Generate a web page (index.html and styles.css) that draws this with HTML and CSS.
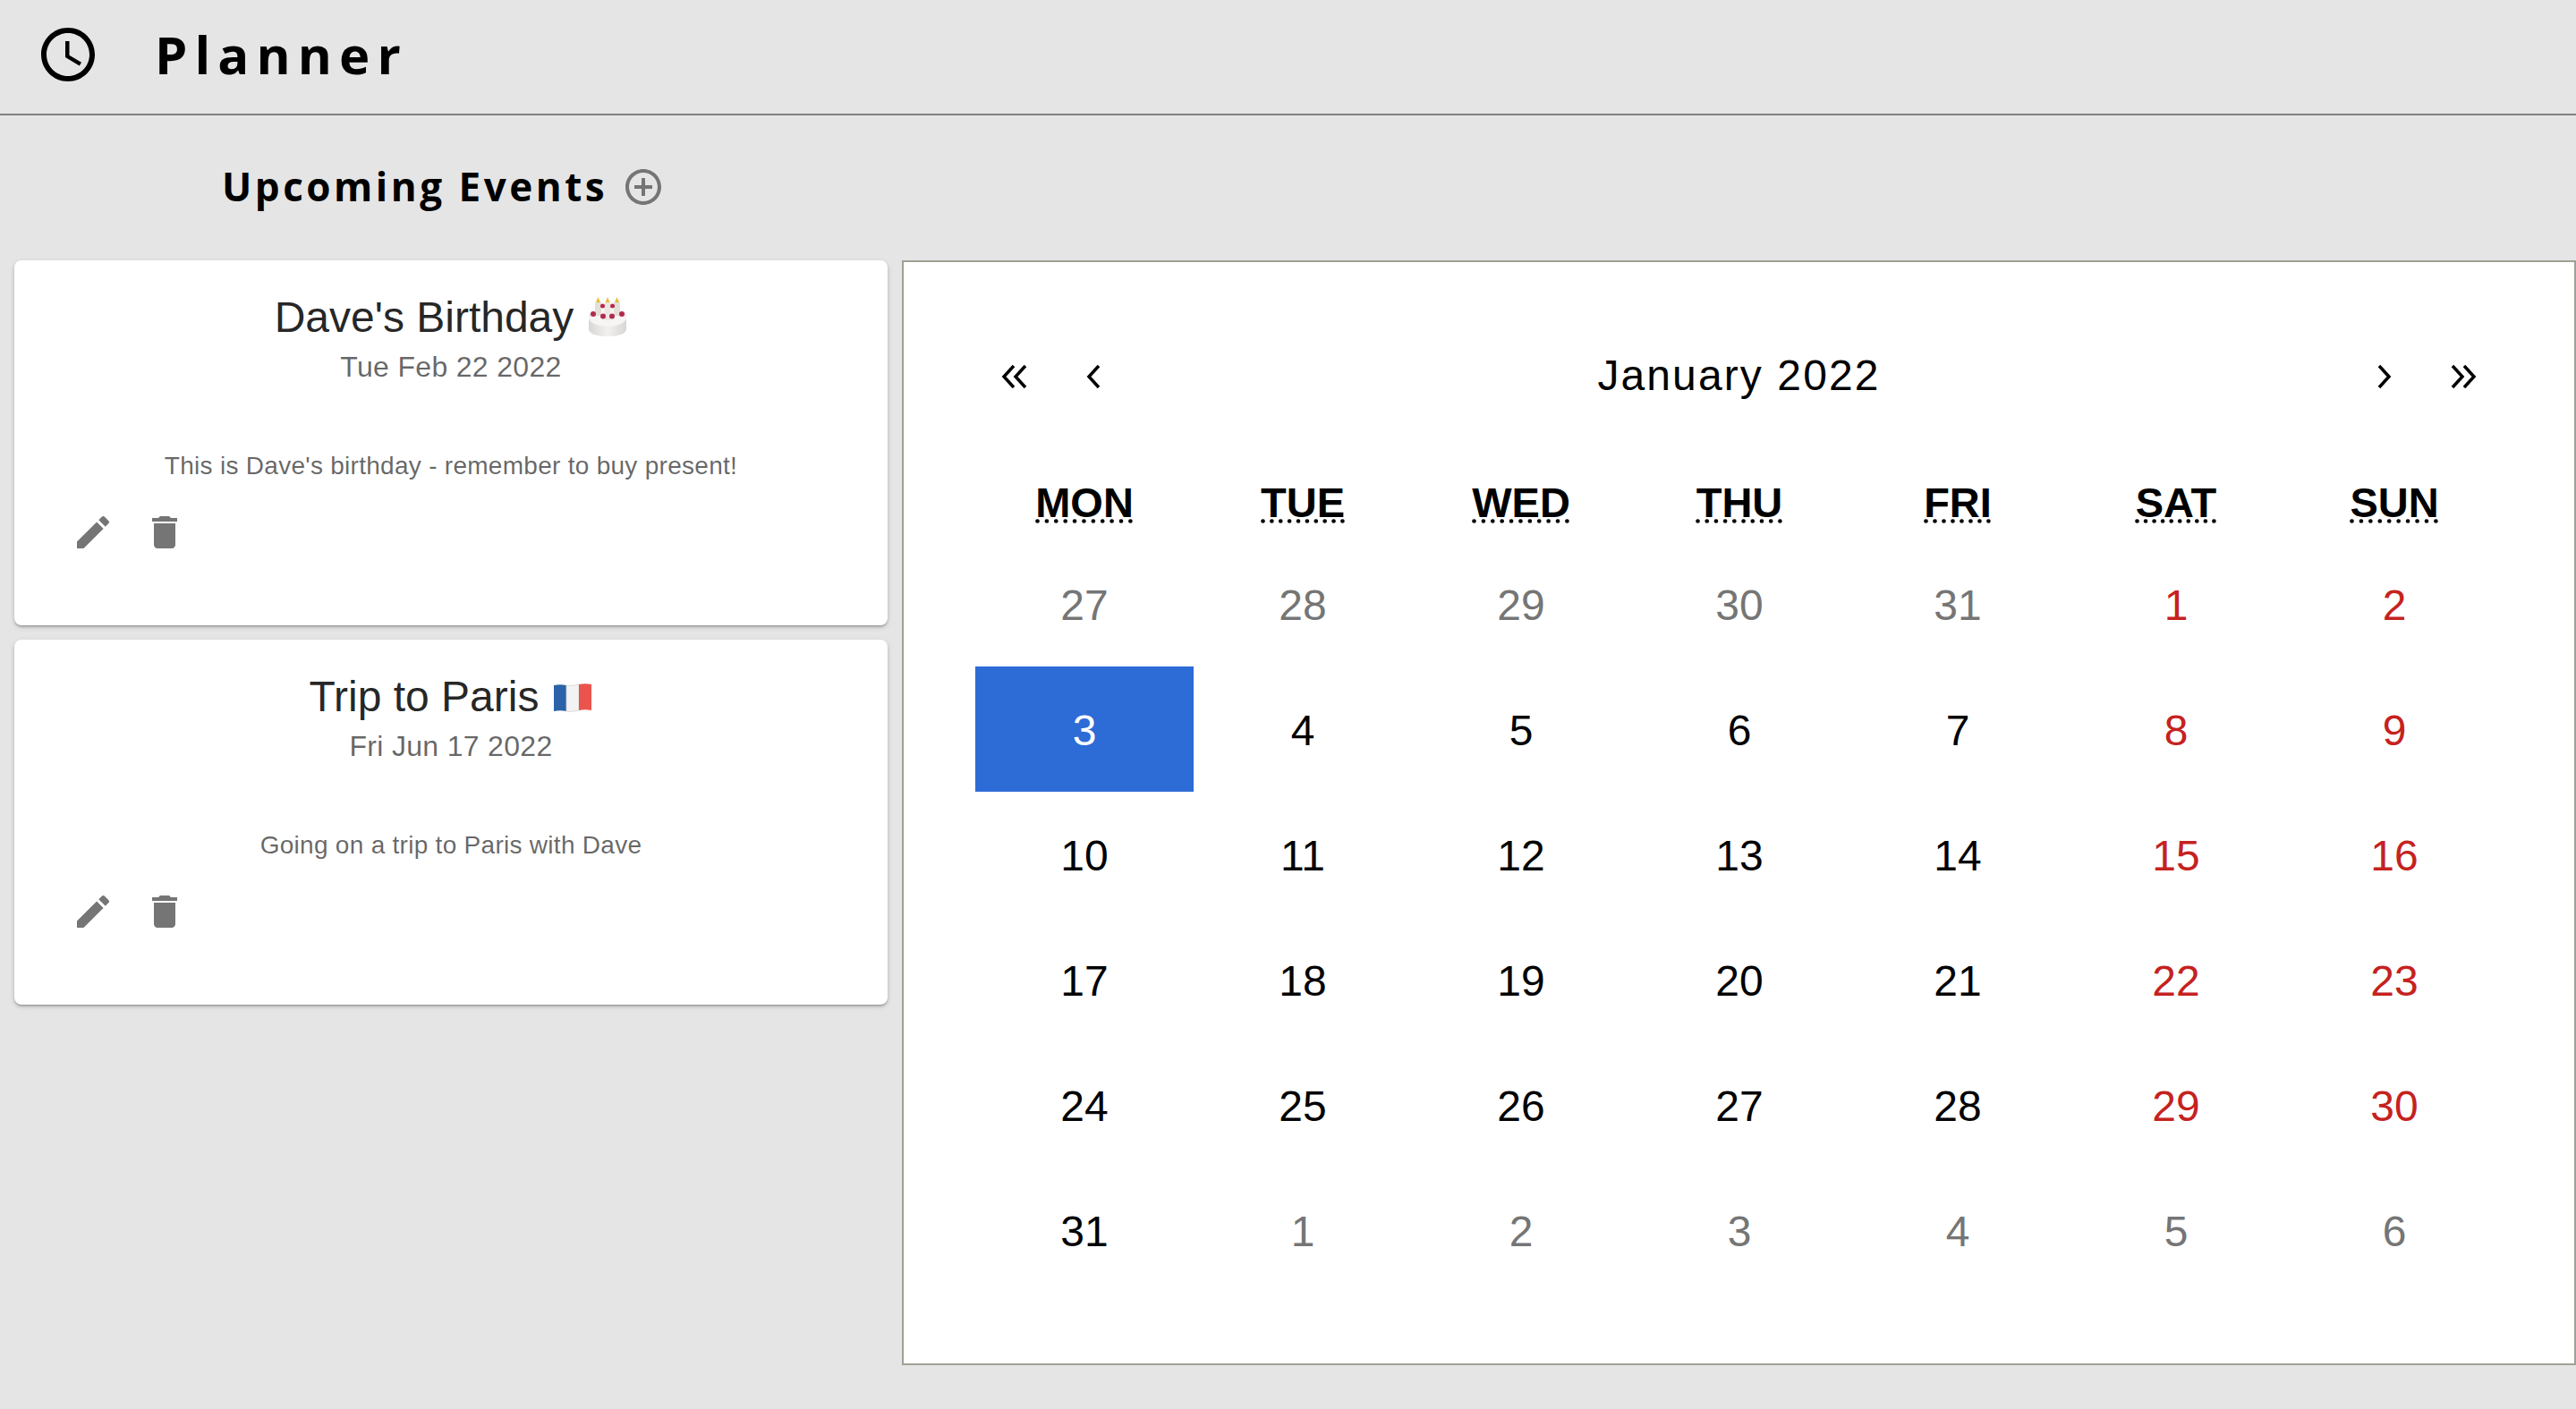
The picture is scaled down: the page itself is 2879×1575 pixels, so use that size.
FILE: index.html
```html
<!DOCTYPE html>
<html lang="en">
<head>
    <meta charset="utf-8">
    <title>Planner</title>
    <link rel="stylesheet" href="styles.css">
</head>
<body>
    <header class="app-bar">
        <svg class="clock-icon" viewBox="0 0 24 24"><path d="M11.99 2C6.47 2 2 6.48 2 12s4.47 10 9.99 10C17.52 22 22 17.52 22 12S17.52 2 11.99 2zM12 20c-4.42 0-8-3.58-8-8s3.58-8 8-8 8 3.58 8 8-3.58 8-8 8zm.5-13H11v6l5.25 3.15.75-1.23-4.5-2.67z"/></svg>
        <h1>Planner</h1>
    </header>

    <div class="section-title">
        <h2>Upcoming Events</h2>
        <svg class="add-icon" viewBox="0 0 24 24"><path d="M13 7h-2v4H7v2h4v4h2v-4h4v-2h-4V7zm-1-5C6.49 2 2 6.49 2 12s4.49 10 10 10 10-4.49 10-10S17.51 2 12 2zm0 18c-4.41 0-8-3.59-8-8s3.59-8 8-8 8 3.59 8 8-3.59 8-8 8z"/></svg>
    </div>

    <main class="columns">
        <section class="events">
            <article class="card">
                <div class="card-title">
                    <span>Dave's Birthday</span>
                    <svg class="emoji" viewBox="0 0 44 44">
                        <defs>
                            <linearGradient id="cake-side" x1="0" x2="1" y1="0" y2="0">
                                <stop offset="0" stop-color="#d8d6d3"/>
                                <stop offset=".5" stop-color="#f2f1ef"/>
                                <stop offset="1" stop-color="#d8d6d3"/>
                            </linearGradient>
                        </defs>
                        <path d="M1 21c0-4 9-7 21-7s21 3 21 7v15c0 5-9 8-21 8S1 41 1 36z" fill="url(#cake-side)"/>
                        <ellipse cx="22" cy="23" rx="21" ry="10" fill="#f6f5f4"/>
                        <rect x="8" y="6" width="7" height="15" fill="#e4dfd7"/>
                        <rect x="18.500" y="6" width="7" height="20" fill="#ece8e1"/>
                        <rect x="29" y="6" width="7" height="15" fill="#e4dfd7"/>
                        <path d="M11.500 0l2.500 6h-5zM22 0l2.500 6h-5zM32.500 0l2.500 6h-5z" fill="#e9bd3f"/>
                        <g fill="#b32a50">
                            <circle cx="6" cy="19" r="3"/><circle cx="38" cy="19" r="3"/>
                            <circle cx="17" cy="21.500" r="3"/><circle cx="27" cy="21.500" r="3"/>
                            <circle cx="16.500" cy="10" r="2.500"/><circle cx="27.500" cy="10" r="2.500"/>
                        </g>
                    </svg>
                </div>
                <p class="card-date">Tue Feb 22 2022</p>
                <p class="card-text">This is Dave's birthday - remember to buy present!</p>
                <div class="card-actions">
                    <svg class="action-icon" viewBox="0 0 24 24"><path d="M3 17.25V21h3.75L17.81 9.94l-3.75-3.75L3 17.25zM20.710 7.040c.39-.39.39-1.020 0-1.410l-2.340-2.340c-.39-.39-1.020-.39-1.410 0l-1.830 1.830 3.750 3.750 1.830-1.830z"/></svg>
                    <svg class="action-icon" viewBox="0 0 24 24"><path d="M6 19c0 1.100.9 2 2 2h8c1.100 0 2-.9 2-2V7H6v12zM19 4h-3.500l-1-1h-5l-1 1H5v2h14V4z"/></svg>
                </div>
            </article>
            <article class="card">
                <div class="card-title">
                    <span>Trip to Paris</span>
                    <svg class="emoji" viewBox="0 0 44 44">
                        <path d="M1 10c5-1 9-1 14 0v29c-5-1-9-1-14 0z" fill="#2b63a8"/>
                        <path d="M15 10c5 1 9 0 14-1v29c-5 1-9 2-14 1z" fill="#f4f3f3" stroke="#d2d2d2" stroke-width=".8"/>
                        <path d="M29 9c5-1 9-1 14 0v29c-5-1-9-1-14 0z" fill="#e9544c"/>
                    </svg>
                </div>
                <p class="card-date">Fri Jun 17 2022</p>
                <p class="card-text">Going on a trip to Paris with Dave</p>
                <div class="card-actions">
                    <svg class="action-icon" viewBox="0 0 24 24"><path d="M3 17.25V21h3.75L17.81 9.94l-3.75-3.75L3 17.25zM20.710 7.040c.39-.39.39-1.020 0-1.410l-2.340-2.340c-.39-.39-1.020-.39-1.410 0l-1.830 1.830 3.750 3.750 1.830-1.830z"/></svg>
                    <svg class="action-icon" viewBox="0 0 24 24"><path d="M6 19c0 1.100.9 2 2 2h8c1.100 0 2-.9 2-2V7H6v12zM19 4h-3.500l-1-1h-5l-1 1H5v2h14V4z"/></svg>
                </div>
            </article>
        </section>

        <section class="calendar">
            <nav class="calendar-nav">
                <button class="nav-arrow"><svg class="chevron-icon" viewBox="0 0 30 28"><path d="M14 2L3 14l11 12M27 2L16 14l11 12"/></svg></button>
                <button class="nav-arrow"><svg class="chevron-icon" viewBox="0 0 30 28"><path d="M21 2L10 14l11 12"/></svg></button>
                <span class="nav-label">January 2022</span>
                <button class="nav-arrow"><svg class="chevron-icon" viewBox="0 0 30 28"><path d="M9 2l11 12L9 26"/></svg></button>
                <button class="nav-arrow"><svg class="chevron-icon" viewBox="0 0 30 28"><path d="M3 2l11 12L3 26M16 2l11 12-11 12"/></svg></button>
            </nav>
            <div class="weekdays">
                <abbr title="Monday">MON</abbr>
                <abbr title="Tuesday">TUE</abbr>
                <abbr title="Wednesday">WED</abbr>
                <abbr title="Thursday">THU</abbr>
                <abbr title="Friday">FRI</abbr>
                <abbr title="Saturday">SAT</abbr>
                <abbr title="Sunday">SUN</abbr>
            </div>
            <div class="days">
                <button class="day other">27</button>
                <button class="day other">28</button>
                <button class="day other">29</button>
                <button class="day other">30</button>
                <button class="day other">31</button>
                <button class="day weekend">1</button>
                <button class="day weekend">2</button>

                <button class="day active">3</button>
                <button class="day">4</button>
                <button class="day">5</button>
                <button class="day">6</button>
                <button class="day">7</button>
                <button class="day weekend">8</button>
                <button class="day weekend">9</button>

                <button class="day">10</button>
                <button class="day">11</button>
                <button class="day">12</button>
                <button class="day">13</button>
                <button class="day">14</button>
                <button class="day weekend">15</button>
                <button class="day weekend">16</button>

                <button class="day">17</button>
                <button class="day">18</button>
                <button class="day">19</button>
                <button class="day">20</button>
                <button class="day">21</button>
                <button class="day weekend">22</button>
                <button class="day weekend">23</button>

                <button class="day">24</button>
                <button class="day">25</button>
                <button class="day">26</button>
                <button class="day">27</button>
                <button class="day">28</button>
                <button class="day weekend">29</button>
                <button class="day weekend">30</button>

                <button class="day">31</button>
                <button class="day other">1</button>
                <button class="day other">2</button>
                <button class="day other">3</button>
                <button class="day other">4</button>
                <button class="day other">5</button>
                <button class="day other">6</button>
            </div>
        </section>
    </main>
</body>
</html>
```

FILE: styles.css
```css
html {
    font-family: "Open Sans", "Liberation Sans", sans-serif;
    color: #000;
}

body {
    margin: 0;
    height: 1575px;
    overflow: hidden;
    background: #e5e5e5;
}

/* --- Top bar --- */
.app-bar {
    display: flex;
    align-items: center;
    box-sizing: border-box;
    height: 129px;
    padding: 0 0 6px 40px;
    border-bottom: 2px solid #808080;
}

.clock-icon {
    width: 72px;
    height: 72px;
    margin-right: 61px;
}

h1 {
    margin: 0;
    font-size: 58px;
    font-weight: 700;
    letter-spacing: 0.14em;
}

.section-title {
    display: flex;
    align-items: center;
    box-sizing: border-box;
    height: 162px;
    padding: 0 0 3px 248px;
}

h2 {
    margin: 0 0 2px;
    font-size: 44px;
    font-weight: 700;
    letter-spacing: 0.08em;
}

.add-icon {
    width: 48px;
    height: 48px;
    margin-left: 16px;
    fill: #757575;
}

/* --- Two columns --- */
.columns {
    display: grid;
    grid-template-columns: 976px 1871px;
    column-gap: 16px;
    padding-left: 16px;
    align-items: start;
}

.events {
    display: flex;
    flex-direction: column;
    gap: 16px;
}

.card {
    box-sizing: border-box;
    height: 408px;
    padding-top: 31px;
    text-align: center;
    font-family: "Liberation Sans", Arial, sans-serif;
    background: #fff;
    border-radius: 8px;
    box-shadow: 0 2px 2px -1px rgba(0,0,0,.2), 0 2px 3px 0 rgba(0,0,0,.14), 0 2px 6px 0 rgba(0,0,0,.12);
}

.card-title {
    display: flex;
    justify-content: center;
    align-items: center;
    gap: 16px;
    height: 64px;
    font-size: 48px;
    color: rgba(0,0,0,.87);
}

.emoji {
    width: 44px;
    height: 44px;
}

.card-date {
    margin: 0;
    font-size: 32px;
    line-height: 48px;
    letter-spacing: 0.01em;
    color: rgba(0,0,0,.6);
}

.card-text {
    margin: 67px 0 0;
    font-size: 28px;
    line-height: 40px;
    letter-spacing: 0.01em;
    color: rgba(0,0,0,.6);
}

.card-actions {
    display: flex;
    gap: 32px;
    margin-top: 30px;
    padding-left: 64px;
}

.action-icon {
    width: 48px;
    height: 48px;
    fill: #757575;
}

/* --- Calendar --- */
.calendar {
    box-sizing: border-box;
    height: 1235px;
    padding: 80px 80px 0;
    font-family: "Liberation Sans", Arial, sans-serif;
    background: #fff;
    border: 2px solid #a0a096;
}

.calendar-nav {
    display: flex;
    align-items: center;
    height: 96px;
}

.nav-arrow {
    display: flex;
    justify-content: center;
    width: 88px;
    padding: 0;
    background: none;
    border: none;
}

.chevron-icon {
    width: 30px;
    height: 28px;
    fill: none;
    stroke: #000;
    stroke-width: 3.5;
}

.nav-label {
    flex: 1;
    padding-bottom: 3px;
    text-align: center;
    font-size: 48px;
    letter-spacing: 0.044em;
}

.weekdays {
    display: grid;
    grid-template-columns: repeat(7, 244px);
    box-sizing: border-box;
    margin-top: 52px;
    height: 84px;
    padding-bottom: 4px;
    align-items: center;
    text-align: center;
    font-size: 47px;
    font-weight: 700;
}

.days {
    display: grid;
    grid-template-columns: repeat(7, 244px);
    grid-auto-rows: 140px;
}

.day {
    padding: 3px 0 0;
    font: inherit;
    font-size: 48px;
    color: #000;
    background: none;
    border: none;
}

.day.other {
    color: #757575;
}

.day.weekend {
    color: #c5221f;
}

.day.active {
    color: #fff;
    background: #2d6bd6;
}
```
